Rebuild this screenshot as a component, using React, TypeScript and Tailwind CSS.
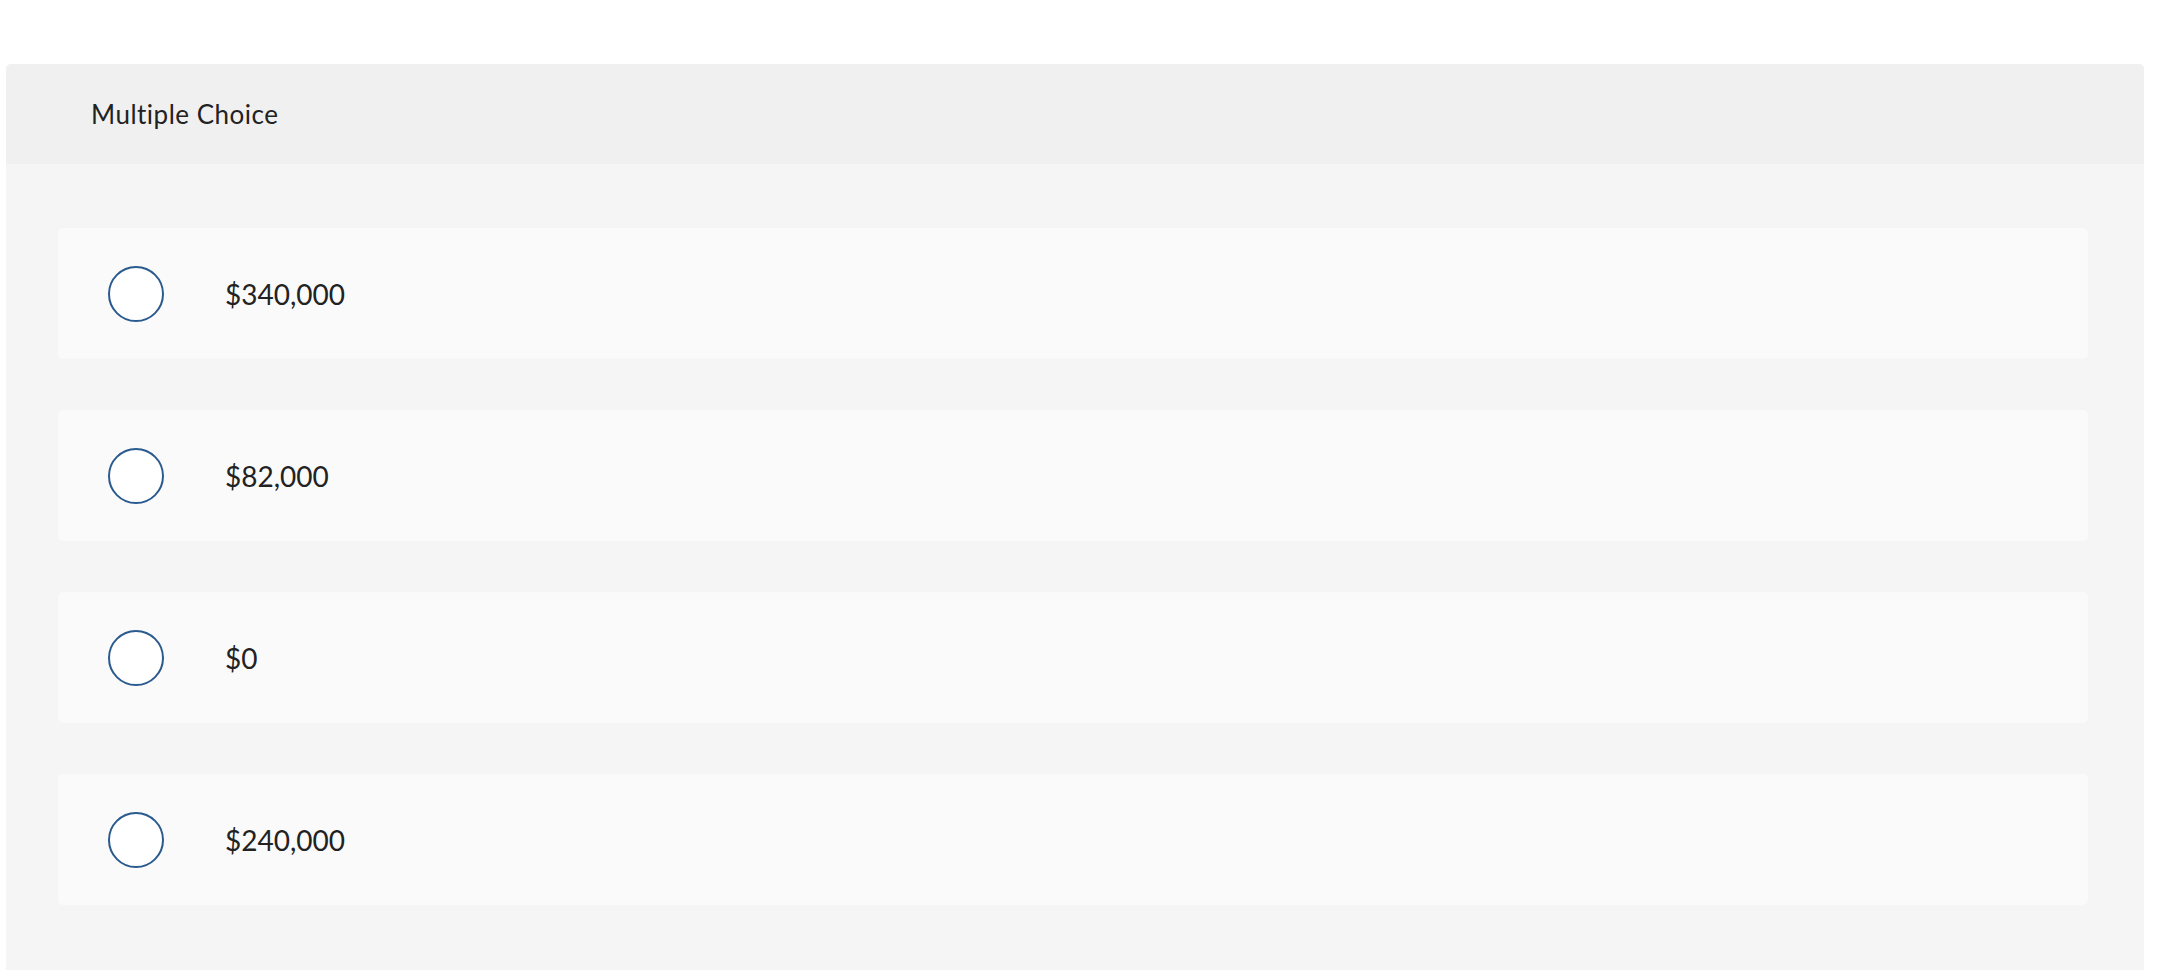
const options = ['$340,000', '$82,000', '$0', '$240,000']

export default function App() {
  return (
    <div
      className="min-h-screen bg-white pt-[64px] pl-[6px] pr-[14px] [font-variant-ligatures:none]"
      style={{ fontFamily: 'Lato, "Open Sans", sans-serif' }}
    >
      <div className="rounded-t-[5px] overflow-hidden bg-[#f5f5f5] min-h-[906px]">
        <div className="h-[100px] bg-[#f0f0f0] flex items-center pl-[85px] text-[26px] tracking-[0.5px] text-[#222]">
          Multiple Choice
        </div>
        <div className="flex flex-col gap-[51px] pt-[64px] pl-[52px] pr-[56px] pb-[64px]">
          {options.map((opt) => (
            <label
              key={opt}
              className="h-[131px] rounded-[5px] bg-[#fafafa] flex items-center pl-[50px] cursor-pointer"
            >
              <span className="w-[56px] h-[56px] rounded-full border-2 border-[#2b5a8e] bg-white shrink-0" />
              <span className="ml-[61px] text-[28px] text-[#222]">{opt}</span>
            </label>
          ))}
        </div>
      </div>
    </div>
  )
}
